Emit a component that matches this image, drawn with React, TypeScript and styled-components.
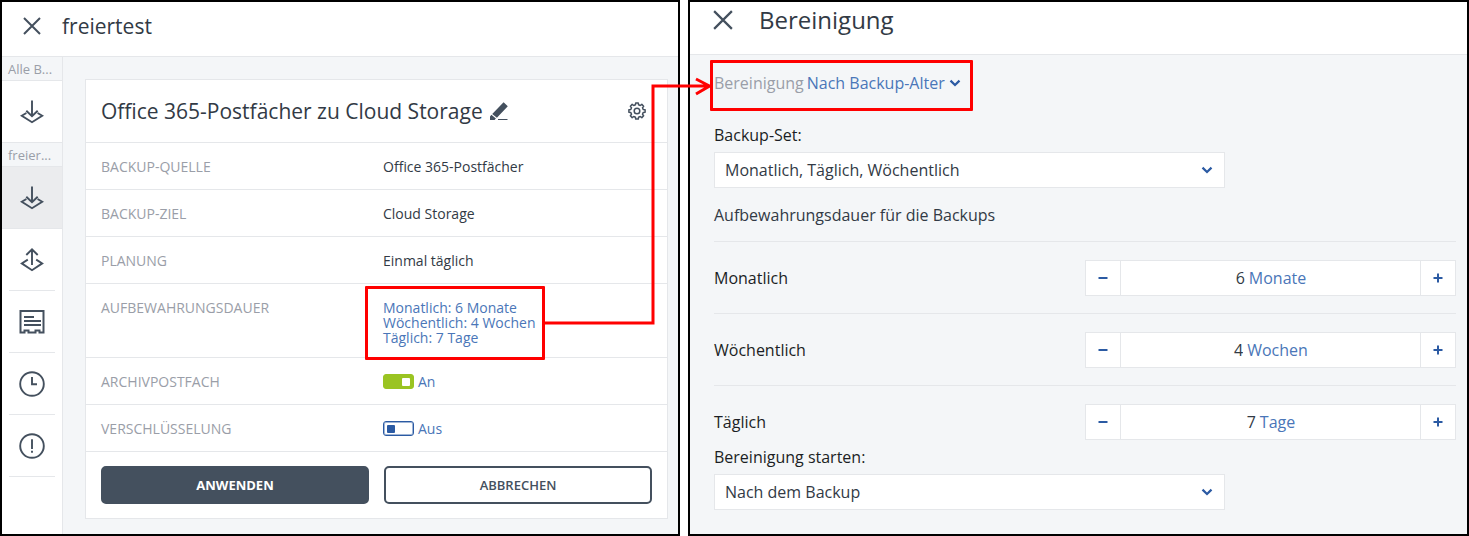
import React, { useId, useState } from "react";
import styled, { createGlobalStyle } from "styled-components";

const color = {
  text: "#323a45",
  strong: "#1b1e24",
  muted: "#9a9ea8",
  link: "#4a76b8",
  accent: "#2b5aa3",
  slate: "#44505e",
  line: "#e5e7ea",
  canvas: "#f4f6f8",
  active: "#ebecee",
  on: "#9ac422",
  mark: "#ff0000",
};

const GlobalStyle = createGlobalStyle`
  *, *::before, *::after { box-sizing: border-box; }
  body {
    margin: 0;
    background: #fff;
    color: ${color.text};
    font-family: "Open Sans", "Noto Sans", sans-serif;
    font-size: 14px;
  }
  button, input, select { font: inherit; color: inherit; margin: 0; }
  a { color: ${color.link}; text-decoration: none; }
  h1, h2, dl, dd, p { margin: 0; font-weight: 400; }
`;

const Shell = styled.div`
  display: grid;
  grid-template-columns: 680fr 781fr;
  gap: 8px;
  min-height: 100vh;
`;

const Panel = styled.section`
  display: flex;
  flex-direction: column;
  min-width: 0;
  border: 2px solid #000;
  background: ${color.canvas};
`;

const PanelHeader = styled.header<{ $large?: boolean }>`
  display: flex;
  align-items: center;
  gap: ${(p) => (p.$large ? 26 : 21)}px;
  height: ${(p) => (p.$large ? 53 : 55)}px;
  padding: ${(p) => (p.$large ? "0 23px 16px" : "0 21px 6px")};
  border-bottom: 1px solid ${color.line};
  background: #fff;
`;

const PanelTitle = styled.h1<{ $large?: boolean }>`
  font-size: ${(p) => (p.$large ? 24 : 21)}px;
  line-height: 32px;
`;

const IconButton = styled.button`
  display: inline-flex;
  padding: 0;
  border: 0;
  background: none;
  color: ${color.slate};
  cursor: pointer;
`;

const Body = styled.div`
  display: flex;
  flex: 1;
`;

const Sidebar = styled.nav`
  flex: none;
  width: 61px;
  border-right: 1px solid ${color.line};
  background: #fff;
`;

const GroupLabel = styled.div`
  height: 24px;
  padding: 0 6px;
  overflow: hidden;
  border-bottom: 1px solid ${color.line};
  background: ${color.canvas};
  color: ${color.muted};
  font-size: 13px;
  line-height: 24px;
  white-space: nowrap;
`;

const NavItem = styled.a<{ $active?: boolean; $inset?: boolean }>`
  display: flex;
  align-items: center;
  justify-content: center;
  height: 62px;
  margin: ${(p) => (p.$inset ? "0 7px" : "0")};
  border-bottom: 1px solid ${color.line};
  background: ${(p) => (p.$active ? color.active : "#fff")};
  color: ${color.slate};
`;

const Main = styled.main`
  flex: 1;
  min-width: 0;
  padding: 22px 10px 15px 22px;
`;

const Card = styled.form`
  border: 1px solid ${color.line};
  background: #fff;
`;

const CardHeader = styled.div`
  display: flex;
  align-items: center;
  gap: 7px;
  height: 62px;
  padding: 0 21px 0 15px;
`;

const CardTitle = styled.h2`
  font-size: 21px;
  line-height: 32px;
  white-space: nowrap;
`;

const Spacer = styled.span`
  flex: 1;
`;

const Row = styled.div<{ $tight?: boolean }>`
  display: grid;
  grid-template-columns: 282px 1fr;
  padding: 16px 15px ${(p) => (p.$tight ? 12 : 15)}px;
  border-top: 1px solid ${color.line};
  line-height: 15px;
`;

const RowLabel = styled.dt`
  color: ${color.muted};
`;

const RowValue = styled.dd`
  position: relative;
`;

const RetentionLink = styled.a`
  display: block;
  width: max-content;
  white-space: pre-line;
`;

const RetentionMark = styled.span`
  position: absolute;
  top: -14px;
  left: -18px;
  width: 180px;
  height: 74px;
  border: 3px solid ${color.mark};
  border-radius: 1px;
  pointer-events: none;
`;

const ToggleLabel = styled.label`
  display: flex;
  align-items: center;
  gap: 4px;
  color: ${color.link};
`;

const Toggle = styled.input`
  appearance: none;
  display: flex;
  align-items: center;
  width: 31px;
  height: 15px;
  padding: 0 2px;
  border: 1px solid ${color.accent};
  border-radius: 3px;
  background: #fff;
  box-shadow: inset 0 0 0 1px #9fb5d6;

  &::after {
    content: "";
    width: 8px;
    height: 8px;
    margin: 0 1px;
    border-radius: 1px;
    background: ${color.accent};
  }

  &:checked {
    justify-content: flex-end;
    border-color: ${color.on};
    background: ${color.on};
    box-shadow: none;
  }

  &:checked::after {
    background: #fff;
  }
`;

const Actions = styled.div`
  display: grid;
  grid-template-columns: 1fr 1fr;
  gap: 15px;
  padding: 14px 15px;
  border-top: 1px solid ${color.line};
`;

const ActionButton = styled.button<{ $primary?: boolean }>`
  height: 38px;
  border: 2px solid ${color.slate};
  border-radius: 5px;
  background: ${(p) => (p.$primary ? color.slate : "#fff")};
  color: ${(p) => (p.$primary ? "#fff" : color.slate)};
  font-size: 13px;
  font-weight: ${(p) => (p.$primary ? 700 : 600)};
`;

const Settings = styled.form`
  display: flex;
  flex-direction: column;
  padding: 16px 11px 22px 24px;
  font-size: 16px;
  line-height: 24px;
`;

const ModeRow = styled.div`
  position: relative;
  display: flex;
  align-items: center;
  width: max-content;
  margin-bottom: 28px;
  color: ${color.muted};
`;

const ModeMark = styled.span`
  position: absolute;
  top: -11px;
  left: -4px;
  width: 263px;
  height: 51px;
  border: 3px solid ${color.mark};
  border-radius: 1px;
  pointer-events: none;
`;

const Connector = styled.svg`
  position: absolute;
  top: 0;
  right: 100%;
  margin-right: 1px;
  pointer-events: none;
`;

const ModeField = styled.div`
  display: grid;
  align-items: center;
  margin-left: 3px;
  color: ${color.link};

  > * { grid-area: 1 / 1; }
  > svg { justify-self: end; color: ${color.accent}; pointer-events: none; }
`;

const ModeSelect = styled.select`
  appearance: none;
  padding: 0 16px 0 0;
  border: 0;
  background: none;
`;

const FieldLabel = styled.label`
  margin-bottom: 5px;
  color: ${color.strong};
`;

const SelectField = styled.div`
  display: grid;
  align-items: center;
  width: 100%;
  max-width: 511px;

  > * { grid-area: 1 / 1; }
  > svg { justify-self: end; margin-right: 12px; color: ${color.accent}; pointer-events: none; }
`;

const Select = styled.select`
  appearance: none;
  width: 100%;
  height: 36px;
  padding: 0 32px 0 10px;
  border: 1px solid ${color.line};
  border-radius: 0;
  background: #fff;
`;

const SectionTitle = styled.p`
  margin: 15px 0 14px;
`;

const PeriodRow = styled.div`
  display: flex;
  align-items: flex-start;
  height: 72px;
  padding-top: 18px;
  border-top: 1px solid ${color.line};
  color: ${color.strong};

  &:last-of-type { height: 60px; }
`;

const PeriodLabel = styled.label`
  flex: 1;
  line-height: 36px;
`;

const PeriodList = styled.div`
  display: flex;
  flex-direction: column;
`;

const Stepper = styled.div`
  display: grid;
  grid-template-columns: 34px 1fr 34px;
  width: 50%;
  height: 36px;
  border: 1px solid ${color.line};
  background: #fff;
`;

const StepButton = styled.button`
  display: flex;
  align-items: center;
  justify-content: center;
  padding: 0;
  border: 0;
  background: none;
  color: ${color.accent};
`;

const StepValue = styled.div`
  display: flex;
  align-items: center;
  justify-content: center;
  gap: 4px;
  border: solid ${color.line};
  border-width: 0 1px;
`;

const StepInput = styled.input`
  width: 10px;
  padding: 0;
  border: 0;
  background: none;
  color: ${color.text};
  text-align: right;
`;

const UnitButton = styled.button`
  padding: 0;
  border: 0;
  background: none;
  color: ${color.link};
`;

const CloseIcon = ({ size }: { size: number }) => (
  <svg width={size} height={size} viewBox="0 0 18 18" fill="none" stroke="currentColor" strokeWidth="2" aria-hidden="true">
    <path d="M1 1 17 17M17 1 1 17" />
  </svg>
);

const Chevron = () => (
  <svg width="12" height="12" viewBox="0 0 12 12" fill="none" stroke="currentColor" strokeWidth="2.2" aria-hidden="true">
    <path d="M1.5 3.6 6 8 10.5 3.6" />
  </svg>
);

const BackupIcon = () => (
  <svg width="26" height="26" viewBox="0 0 26 26" fill="none" stroke="currentColor" strokeWidth="1.9" aria-hidden="true">
    <path d="M13 1.5V17M7.3 11.8 13 17.3 18.7 11.8M7.4 14 2.8 16.8 13 23.2 23.2 16.8 18.6 14" />
  </svg>
);

const RestoreIcon = () => (
  <svg width="26" height="26" viewBox="0 0 26 26" fill="none" stroke="currentColor" strokeWidth="1.9" aria-hidden="true">
    <path d="M13 18V2.5M7.3 8 13 2.3 18.7 8M8.8 12.6 2.8 16.4 13 23.2 23.2 16.4 17.2 12.6" />
  </svg>
);

const ReportIcon = () => (
  <svg width="26" height="26" viewBox="0 0 26 26" fill="none" stroke="currentColor" strokeWidth="2" aria-hidden="true">
    <path d="M1.5 2h23v21.5h-4v-2h-4v2H9.5v-2h-4v2h-4Z" />
    <path d="M5 8h10M5 12h17M5 16h17" />
  </svg>
);

const ClockIcon = () => (
  <svg width="26" height="26" viewBox="0 0 26 26" fill="none" stroke="currentColor" strokeWidth="1.9" aria-hidden="true">
    <circle cx="13" cy="13" r="11.8" />
    <path d="M13 6v7.3h5" />
  </svg>
);

const AlertIcon = () => (
  <svg width="26" height="26" viewBox="0 0 26 26" fill="none" stroke="currentColor" strokeWidth="1.9" aria-hidden="true">
    <circle cx="13" cy="13" r="11.8" />
    <path d="M13 6.2v9.8M13 17.8v2" />
  </svg>
);

const PencilIcon = () => (
  <svg width="18" height="18" viewBox="0 0 18 18" aria-hidden="true">
    <path fill="currentColor" d="M13.6 0.3 17.8 4.2 6.9 15.8 2.2 11.9ZM1.4 12.8 5.9 16.6 4.6 18H0V14.5Z" />
    <path stroke="currentColor" d="M8 17.5H17.5" />
  </svg>
);

/* Outline of an eight-toothed gear centred on (9, 9). */
const gearPath = (() => {
  const points: string[] = [];
  for (let i = 0; i < 8; i++) {
    const steps: [number, number][] = [[-14, 6.4], [-9, 8.2], [9, 8.2], [14, 6.4]];
    steps.forEach(([offset, r]) => {
      const a = ((i * 45 + offset) * Math.PI) / 180;
      points.push(`${(9 + r * Math.cos(a)).toFixed(2)} ${(9 + r * Math.sin(a)).toFixed(2)}`);
    });
  }
  return `M${points.join("L")}Z`;
})();

const GearIcon = () => (
  <svg width="18" height="18" viewBox="0 0 18 18" fill="none" stroke="currentColor" strokeWidth="1.5" strokeLinejoin="round" aria-hidden="true">
    <path d={gearPath} />
    <circle cx="9" cy="9" r="2.8" />
  </svg>
);

const MinusIcon = () => (
  <svg width="10" height="10" viewBox="0 0 10 10" stroke="currentColor" strokeWidth="2" aria-hidden="true">
    <path d="M0.5 5h9" />
  </svg>
);

const PlusIcon = () => (
  <svg width="10" height="10" viewBox="0 0 10 10" stroke="currentColor" strokeWidth="2" aria-hidden="true">
    <path d="M0.5 5h9M5 0.5v9" />
  </svg>
);

function ToggleField({ id, initial }: { id: string; initial: boolean }) {
  const [on, setOn] = useState(initial);
  return (
    <ToggleLabel>
      <Toggle id={id} type="checkbox" role="switch" checked={on} onChange={() => setOn(!on)} />
      {on ? "An" : "Aus"}
    </ToggleLabel>
  );
}

function Period({ label, initial, unit }: { label: string; initial: number; unit: string }) {
  const id = useId();
  const [value, setValue] = useState(initial);
  return (
    <PeriodRow>
      <PeriodLabel htmlFor={id}>{label}</PeriodLabel>
      <Stepper>
        <StepButton type="button" aria-label="Weniger" onClick={() => setValue(Math.max(1, value - 1))}>
          <MinusIcon />
        </StepButton>
        <StepValue>
          <StepInput id={id} value={value} inputMode="numeric" onChange={(e) => setValue(Number(e.target.value) || 1)} />
          <UnitButton type="button">{unit}</UnitButton>
        </StepValue>
        <StepButton type="button" aria-label="Mehr" onClick={() => setValue(value + 1)}>
          <PlusIcon />
        </StepButton>
      </Stepper>
    </PeriodRow>
  );
}

function PlanPanel() {
  return (
    <Panel>
      <PanelHeader>
        <IconButton type="button" aria-label="Schließen"><CloseIcon size={18} /></IconButton>
        <PanelTitle>freiertest</PanelTitle>
      </PanelHeader>
      <Body>
        <Sidebar>
          <GroupLabel>Alle B...</GroupLabel>
          <NavItem href="#alle" aria-label="Alle Backups"><BackupIcon /></NavItem>
          <GroupLabel>freier...</GroupLabel>
          <NavItem href="#backup" aria-label="Backup" $active><BackupIcon /></NavItem>
          <NavItem href="#recovery" aria-label="Recovery" $inset><RestoreIcon /></NavItem>
          <NavItem href="#details" aria-label="Details" $inset><ReportIcon /></NavItem>
          <NavItem href="#verlauf" aria-label="Verlauf" $inset><ClockIcon /></NavItem>
          <NavItem href="#alarme" aria-label="Alarme" $inset><AlertIcon /></NavItem>
        </Sidebar>
        <Main>
          <Card onSubmit={(e) => e.preventDefault()}>
            <CardHeader>
              <CardTitle>Office 365-Postfächer zu Cloud Storage</CardTitle>
              <IconButton type="button" aria-label="Umbenennen"><PencilIcon /></IconButton>
              <Spacer />
              <IconButton type="button" aria-label="Optionen"><GearIcon /></IconButton>
            </CardHeader>
            <dl>
              <Row><RowLabel>BACKUP-QUELLE</RowLabel><RowValue>Office 365-Postfächer</RowValue></Row>
              <Row><RowLabel>BACKUP-ZIEL</RowLabel><RowValue>Cloud Storage</RowValue></Row>
              <Row><RowLabel>PLANUNG</RowLabel><RowValue>Einmal täglich</RowValue></Row>
              <Row $tight>
                <RowLabel>AUFBEWAHRUNGSDAUER</RowLabel>
                <RowValue>
                  <RetentionLink href="#bereinigung">{"Monatlich: 6 Monate\nWöchentlich: 4 Wochen\nTäglich: 7 Tage"}</RetentionLink>
                  <RetentionMark />
                </RowValue>
              </Row>
              <Row>
                <RowLabel><label htmlFor="archiv">ARCHIVPOSTFACH</label></RowLabel>
                <RowValue><ToggleField id="archiv" initial /></RowValue>
              </Row>
              <Row>
                <RowLabel><label htmlFor="crypt">VERSCHLÜSSELUNG</label></RowLabel>
                <RowValue><ToggleField id="crypt" initial={false} /></RowValue>
              </Row>
            </dl>
            <Actions>
              <ActionButton type="submit" $primary>ANWENDEN</ActionButton>
              <ActionButton type="button">ABBRECHEN</ActionButton>
            </Actions>
          </Card>
        </Main>
      </Body>
    </Panel>
  );
}

function CleanupPanel() {
  return (
    <Panel>
      <PanelHeader $large>
        <IconButton type="button" aria-label="Schließen"><CloseIcon size={20} /></IconButton>
        <PanelTitle $large>Bereinigung</PanelTitle>
      </PanelHeader>
      <Settings onSubmit={(e) => e.preventDefault()}>
        <ModeRow>
          <label htmlFor="mode">Bereinigung</label>
          <ModeField>
            <ModeSelect id="mode"><option>Nach Backup-Alter</option></ModeSelect>
            <Chevron />
          </ModeField>
          <ModeMark />
          <Connector width="168" height="260" viewBox="0 0 168 260" fill="none" stroke={color.mark} strokeWidth="3">
            <path d="M0 252H108V15H164M151 8 164.5 15 151 23" />
          </Connector>
        </ModeRow>
        <FieldLabel htmlFor="set">Backup-Set:</FieldLabel>
        <SelectField>
          <Select id="set"><option>Monatlich, Täglich, Wöchentlich</option></Select>
          <Chevron />
        </SelectField>
        <SectionTitle>Aufbewahrungsdauer für die Backups</SectionTitle>
        <PeriodList>
          <Period label="Monatlich" initial={6} unit="Monate" />
          <Period label="Wöchentlich" initial={4} unit="Wochen" />
          <Period label="Täglich" initial={7} unit="Tage" />
        </PeriodList>
        <FieldLabel htmlFor="start">Bereinigung starten:</FieldLabel>
        <SelectField>
          <Select id="start"><option>Nach dem Backup</option></Select>
          <Chevron />
        </SelectField>
      </Settings>
    </Panel>
  );
}

export default function App() {
  return (
    <>
      <GlobalStyle />
      <Shell>
        <PlanPanel />
        <CleanupPanel />
      </Shell>
    </>
  );
}
